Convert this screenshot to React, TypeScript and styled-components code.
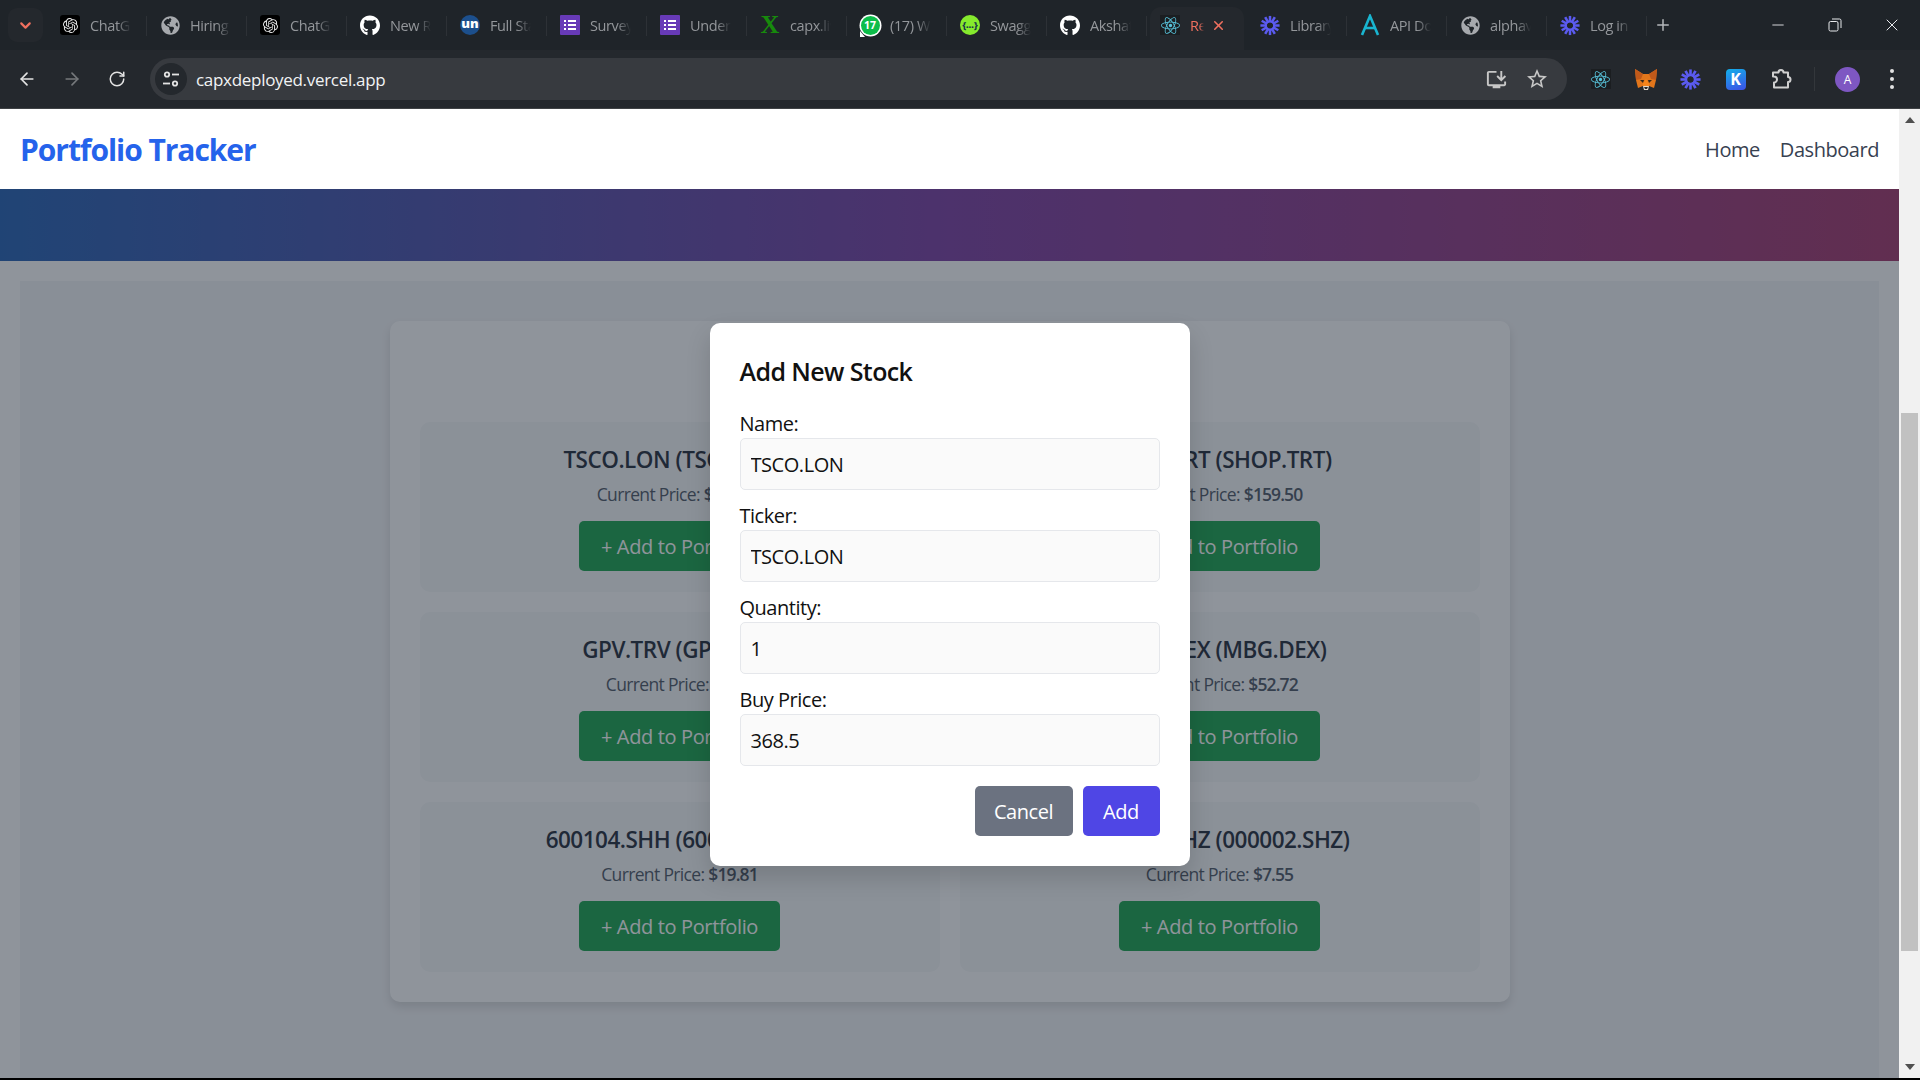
import React from "react";
import styled, { createGlobalStyle } from "styled-components";
import { FaGithub, FaGlobeAmericas, FaReact } from "react-icons/fa";
import { SiOpenai } from "react-icons/si";
import { MdOutlineInstallDesktop, MdStarBorder } from "react-icons/md";
import { ArrowLeft, ArrowRight, ChevronDown, Minus, Plus, RotateCw, X } from "lucide-react";

const Global = createGlobalStyle`
  html, body {
    margin: 0;
    padding: 0;
    height: 100%;
    overflow: hidden;
    background: #000;
  }
  * {
    box-sizing: border-box;
  }
  body {
    font-family: "Open Sans", "Noto Sans", sans-serif;
  }
`;

const Burst = ({ size = 21 }: { size?: number }) => {
  const spokes = Array.from({ length: 12 }, (_, i) => (i * 360) / 12);
  return (
    <svg width={size} height={size} viewBox="0 0 24 24">
      {spokes.map((a) => (
        <line key={a} x1="12" y1="0.5" x2="12" y2="8" stroke="#5b5bf0" strokeWidth="3" transform={`rotate(${a} 12 12)`} />
      ))}
      <circle cx="12" cy="12" r="5" fill="none" stroke="#5b5bf0" strokeWidth="2.6" />
    </svg>
  );
};

const FormsIcon = () => (
  <FormsBox>
    <FormsRow />
    <FormsRow />
    <FormsRow />
  </FormsBox>
);

const AtomBox = styled.span`
  width: 20px;
  height: 20px;
  background: #1b1e21;
  color: #58c4dc;
  display: flex;
  align-items: center;
  justify-content: center;
  font-size: 19px;
`;

const GptBox = styled.span`
  width: 20px;
  height: 20px;
  background: #000;
  border-radius: 3px;
  color: #e8e8e8;
  display: flex;
  align-items: center;
  justify-content: center;
  font-size: 15px;
`;

const FormsBox = styled.span`
  width: 20px;
  height: 20px;
  background: #673ab7;
  border-radius: 1px;
  display: flex;
  flex-direction: column;
  gap: 2px;
  align-items: center;
  justify-content: center;
`;

const FormsRow = styled.span`
  width: 12px;
  height: 2px;
  background: linear-gradient(to right, #fff 2px, transparent 2px, transparent 4px, #fff 4px);
`;

const UnBadge = styled.span`
  width: 20px;
  height: 20px;
  border-radius: 50%;
  background: #1c4f8c;
  color: #fff;
  font-size: 13px;
  font-weight: 800;
  line-height: 17px;
  text-align: center;
`;

const ExcelX = styled.span`
  width: 20px;
  height: 20px;
  color: #178a0c;
  font-family: "Liberation Serif", serif;
  font-size: 26px;
  font-weight: 700;
  line-height: 20px;
  text-align: center;
`;

const WaBadge = styled.span`
  width: 19px;
  height: 19px;
  border-radius: 50%;
  background: #0dbd4a;
  color: #fff;
  font-size: 10.5px;
  font-weight: 700;
  line-height: 19px;
  text-align: center;
  box-shadow: 0 0 0 1.5px #fff;
  position: relative;

  &::after {
    content: "";
    position: absolute;
    left: -1px;
    bottom: -2px;
    width: 0;
    height: 0;
    border-top: 6px solid transparent;
    border-left: 5px solid #fff;
  }
`;

const SwaggerBadge = styled.span`
  width: 20px;
  height: 20px;
  border-radius: 50%;
  background: #85ea2d;
  color: #173647;
  font-size: 9px;
  font-weight: 800;
  line-height: 19px;
  text-align: center;
`;

const LetterA = () => (
  <svg width="20" height="22" viewBox="0 0 20 22" fill="none" stroke="#19b5d0" strokeWidth="2.6">
    <path d="M2 21 L10 2 L18 21" />
    <path d="M5 14 H15" />
  </svg>
);

const PuzzleIcon = () => (
  <svg width="24" height="24" viewBox="0 0 24 24" fill="none" stroke="#d0d0d0" strokeWidth="2" strokeLinejoin="round">
    <path d="M4 5.5 H9.5 a2.5 2.5 0 0 1 5 0 H19 V10 a2.5 2.5 0 0 1 0 5 V20.5 H5 V15.5 a3 3 0 0 0 0 -6 H4 Z" />
  </svg>
);

const tabs = [
  { title: "ChatGPT", icon: <GptBox><SiOpenai /></GptBox> },
  { title: "Hiring", icon: <FaGlobeAmericas color="#a6a9ad" size={19} /> },
  { title: "ChatGPT", icon: <GptBox><SiOpenai /></GptBox> },
  { title: "New Repo", icon: <FaGithub color="#fff" size={21} /> },
  { title: "Full Stack", icon: <UnBadge>un</UnBadge> },
  { title: "Survey", icon: <FormsIcon /> },
  { title: "Under", icon: <FormsIcon /> },
  { title: "capx.live", icon: <ExcelX>X</ExcelX> },
  { title: "(17) WhatsApp", icon: <WaBadge>17</WaBadge> },
  { title: "Swagger", icon: <SwaggerBadge>{"{…}"}</SwaggerBadge> },
  { title: "Akshat", icon: <FaGithub color="#fff" size={21} /> },
  { title: "React", icon: <AtomBox><FaReact /></AtomBox>, active: true },
  { title: "Library", icon: <Burst /> },
  { title: "API Docs", icon: <LetterA /> },
  { title: "alphavantage", icon: <FaGlobeAmericas color="#a6a9ad" size={19} /> },
  { title: "Log in", icon: <Burst /> },
];

const stocks = [
  { name: "TSCO.LON", price: "368.50" },
  { name: "SHOP.TRT", price: "159.50" },
  { name: "GPV.TRV", price: "4.20" },
  { name: "MBG.DEX", price: "52.72" },
  { name: "600104.SHH", price: "19.81" },
  { name: "000002.SHZ", price: "7.55" },
];

const fields = [
  { label: "Name:", value: "TSCO.LON" },
  { label: "Ticker:", value: "TSCO.LON" },
  { label: "Quantity:", value: "1" },
  { label: "Buy Price:", value: "368.5" },
];

const Fox = () => (
  <svg width="24" height="23" viewBox="0 0 24 23">
    <polygon points="1,1 9,6 15,6 23,1 22,12 20,20 15,18 9,18 4,20 2,12" fill="#e2761b" />
    <polygon points="1,1 9,6 7,11 2,12" fill="#c0591a" />
    <polygon points="23,1 15,6 17,11 22,12" fill="#c0591a" />
    <polygon points="9,15 12,11 15,15 15,18 9,18" fill="#f6851b" />
    <polygon points="6,12 10,12 9,15" fill="#35281c" />
    <polygon points="18,12 14,12 15,15" fill="#35281c" />
    <polygon points="9,18 15,18 14,22 10,22" fill="#e4d9cc" />
    <polygon points="10,19 14,19 13,21 11,21" fill="#2b2b2b" />
  </svg>
);

const App = () => {
  return (
    <Screen>
      <Global />
      <TabStrip>
        <TabSearch>
          <ChevronDown size={17} strokeWidth={3} color="#f0705f" />
        </TabSearch>
        {tabs.map((t, i) => (
          <Tab key={i} $active={!!t.active}>
            <Favicon>{t.icon}</Favicon>
            <TabTitle $active={!!t.active}>{t.title}</TabTitle>
            {t.active && (
              <TabClose>
                <X size={15} strokeWidth={2.5} color="#f0705f" />
              </TabClose>
            )}
          </Tab>
        ))}
        <NewTab>
          <Plus size={18} strokeWidth={2} color="#b4b7ba" />
        </NewTab>
        <WindowControls>
          <WinButton>
            <Minus size={18} strokeWidth={1.2} color="#e8eaed" />
          </WinButton>
          <WinButton>
            <RestoreIcon />
          </WinButton>
          <WinButton>
            <X size={20} strokeWidth={1.2} color="#e8eaed" />
          </WinButton>
        </WindowControls>
      </TabStrip>

      <Toolbar>
        <NavIcons>
          <NavIcon>
            <ArrowLeft size={20} color="#e3e3e3" />
          </NavIcon>
          <NavIcon>
            <ArrowRight size={20} color="#75787b" />
          </NavIcon>
          <NavIcon>
            <RotateCw size={18} color="#e3e3e3" />
          </NavIcon>
        </NavIcons>
        <Omnibox>
          <TuneChip>
            <TuneIcon />
          </TuneChip>
          <Url>capxdeployed.vercel.app</Url>
          <OmniActions>
            <MdOutlineInstallDesktop size={23} color="#c7c7c7" />
            <MdStarBorder size={24} color="#c7c7c7" />
          </OmniActions>
        </Omnibox>
        <Extensions>
          <ExtSlot>
            <AtomBox>
              <FaReact />
            </AtomBox>
          </ExtSlot>
          <ExtSlot>
            <Fox />
          </ExtSlot>
          <ExtSlot>
            <Burst />
          </ExtSlot>
          <ExtSlot>
            <KBadge>K</KBadge>
          </ExtSlot>
          <ExtSlot>
            <PuzzleIcon />
          </ExtSlot>
          <ToolbarDivider />
          <Avatar>A</Avatar>
          <Dots>
            <Dot />
            <Dot />
            <Dot />
          </Dots>
        </Extensions>
      </Toolbar>

      <Viewport>
        <PageArea>
          <Navbar>
            <Brand>Portfolio Tracker</Brand>
            <NavLinks>
              <NavLink>Home</NavLink>
              <NavLink>Dashboard</NavLink>
            </NavLinks>
          </Navbar>
          <Hero />
          <Main>
            <Panel>
              <PanelHeading>Available Stocks</PanelHeading>
              <StockGrid>
                {stocks.map((s) => (
                  <StockCard key={s.name}>
                    <StockName>
                      {s.name} ({s.name})
                    </StockName>
                    <StockPrice>
                      Current Price: <PriceValue>${s.price}</PriceValue>
                    </StockPrice>
                    <AddButton>+ Add to Portfolio</AddButton>
                  </StockCard>
                ))}
              </StockGrid>
            </Panel>
          </Main>
          <Overlay>
            <Modal>
              <ModalTitle>Add New Stock</ModalTitle>
              {fields.map((f) => (
                <Field key={f.label}>
                  <FieldLabel>{f.label}</FieldLabel>
                  <FieldInput readOnly value={f.value} />
                </Field>
              ))}
              <ModalActions>
                <ModalButton $bg="#6b7280" $w={98}>Cancel</ModalButton>
                <ModalButton $bg="#4f46e5" $w={77}>Add</ModalButton>
              </ModalActions>
            </Modal>
          </Overlay>
        </PageArea>
        <Scrollbar>
          <ArrowUp />
          <ThumbTrack>
            <Thumb />
          </ThumbTrack>
          <ArrowDown />
        </Scrollbar>
      </Viewport>
      <BottomEdge />
    </Screen>
  );
};

export default App;

const RestoreIcon = () => (
  <svg width="14" height="14" viewBox="0 0 14 14" fill="none" stroke="#e8eaed" strokeWidth="1">
    <rect x="1" y="3.5" width="9" height="9.5" rx="1.5" />
    <path d="M4 1 H11.5 A1.5 1.5 0 0 1 13 2.5 V10" />
  </svg>
);

const TuneIcon = () => (
  <svg width="18" height="18" viewBox="0 0 18 18" fill="none" stroke="#e3e3e3" strokeWidth="1.8">
    <circle cx="5" cy="4.5" r="2.2" />
    <path d="M10 4.5 H17" />
    <circle cx="13" cy="13.5" r="2.2" />
    <path d="M1 13.5 H8" />
  </svg>
);

const Screen = styled.div`
  width: 1920px;
  height: 1080px;
  display: flex;
  flex-direction: column;
  overflow: hidden;
`;

const TabStrip = styled.div`
  height: 50px;
  background: #1f2429;
  display: flex;
  align-items: flex-end;
  padding-left: 8px;
`;

const TabSearch = styled.div`
  width: 35px;
  height: 34px;
  margin: 0 4px 8px 0;
  border-radius: 9px;
  background: #24282d;
  display: flex;
  align-items: center;
  justify-content: center;
`;

const Tab = styled.div<{ $active: boolean }>`
  height: 43px;
  padding: 0 0 7px ${({ $active }) => ($active ? "10px" : "13px")};
  display: flex;
  align-items: center;
  position: relative;
  background: ${({ $active }) => ($active ? "#24282d" : "transparent")};
  border-radius: ${({ $active }) => ($active ? "11px 11px 0 0" : "0")};
  margin: ${({ $active }) => ($active ? "0 3px" : "0")};
  width: ${({ $active }) => ($active ? "94px" : "100px")};

  &::after {
    content: "";
    position: absolute;
    right: 0;
    top: 9px;
    height: 20px;
    width: 1px;
    background: ${({ $active }) => ($active ? "transparent" : "#2d3136")};
  }
`;

const Favicon = styled.span`
  width: 20px;
  height: 22px;
  display: flex;
  align-items: center;
  justify-content: center;
  flex-shrink: 0;
`;

const TabTitle = styled.span<{ $active: boolean }>`
  margin-left: 10px;
  width: ${({ $active }) => ($active ? "14px" : "41px")};
  overflow: hidden;
  white-space: nowrap;
  font-size: 14.5px;
  letter-spacing: -0.4px;
  color: ${({ $active }) => ($active ? "#f0705f" : "#94979b")};
  -webkit-mask-image: linear-gradient(to right, #000 65%, transparent 100%);
  mask-image: linear-gradient(to right, #000 65%, transparent 100%);
`;

const TabClose = styled.span`
  margin-left: 7px;
  display: flex;
`;

const NewTab = styled.div`
  width: 32px;
  height: 43px;
  padding-bottom: 7px;
  display: flex;
  align-items: center;
  justify-content: center;
`;

const WindowControls = styled.div`
  margin-left: auto;
  height: 50px;
  display: flex;
  align-items: center;
`;

const WinButton = styled.div`
  width: 57px;
  height: 50px;
  display: flex;
  align-items: center;
  justify-content: center;
`;

const Toolbar = styled.div`
  height: 59px;
  background: #24282d;
  border-bottom: 1px solid #3f4245;
  display: flex;
  align-items: center;
  padding: 0 0 0 4px;
`;

const NavIcons = styled.div`
  display: flex;
  width: 146px;
`;

const NavIcon = styled.div`
  width: 45px;
  height: 36px;
  display: flex;
  align-items: center;
  justify-content: center;
`;

const Omnibox = styled.div`
  width: 1417px;
  height: 42px;
  border-radius: 21px;
  background: #373a3f;
  display: flex;
  align-items: center;
  padding-left: 5px;
`;

const TuneChip = styled.div`
  width: 32px;
  height: 32px;
  border-radius: 50%;
  background: #24282d;
  display: flex;
  align-items: center;
  justify-content: center;
`;

const Url = styled.span`
  margin-left: 9px;
  font-size: 17px;
  letter-spacing: -0.3px;
  color: #f1f3f4;
`;

const OmniActions = styled.div`
  margin-left: auto;
  padding-right: 18px;
  display: flex;
  align-items: center;
  gap: 17px;
`;

const Extensions = styled.div`
  display: flex;
  align-items: center;
  flex: 1;
  padding-left: 11px;
`;

const ExtSlot = styled.div`
  width: 45px;
  height: 36px;
  display: flex;
  align-items: center;
  justify-content: center;
`;

const KBadge = styled.span`
  width: 20px;
  height: 21px;
  border-radius: 4px;
  background: linear-gradient(160deg, #12b0ea, #3d4fe6);
  color: #fff;
  font-size: 16px;
  font-weight: 700;
  line-height: 21px;
  text-align: center;
`;

const ToolbarDivider = styled.div`
  width: 1px;
  height: 24px;
  background: #33373b;
  margin: 0 20px 0 11px;
`;

const Avatar = styled.div`
  width: 25px;
  height: 25px;
  border-radius: 50%;
  background: #7e57c2;
  color: #fff;
  font-size: 12px;
  text-align: center;
  line-height: 25px;
`;

const Dots = styled.div`
  margin-left: 30px;
  display: flex;
  flex-direction: column;
  gap: 4px;
`;

const Dot = styled.span`
  width: 4px;
  height: 4px;
  border-radius: 50%;
  background: #e3e3e3;
`;

const Viewport = styled.div`
  flex: 1;
  display: flex;
  min-height: 0;
`;

const PageArea = styled.div`
  width: 1899px;
  height: 969px;
  position: relative;
  overflow: hidden;
  background: #fff;
`;

const Navbar = styled.div`
  height: 80px;
  background: #fff;
  display: flex;
  align-items: center;
  justify-content: space-between;
  padding: 0 20px;
  position: relative;
  z-index: 5;
`;

const Brand = styled.div`
  height: 40px;
  font-size: 30px;
  font-weight: 700;
  line-height: 42px;
  letter-spacing: -1.05px;
  color: #2563eb;
`;

const NavLinks = styled.div`
  display: flex;
  gap: 20px;
`;

const NavLink = styled.span`
  font-size: 20px;
  font-weight: 500;
  letter-spacing: -0.45px;
  color: #374151;
`;

const Hero = styled.div`
  height: 72px;
  background: linear-gradient(to right, rgb(33, 95, 179), rgb(122, 58, 160) 50%, rgb(163, 51, 105));
`;

const Main = styled.div`
  margin: 20px 20px 0;
  padding: 40px 0 200px;
  background: #f3f4f6;
`;

const Panel = styled.div`
  width: 1120px;
  margin: 0 auto;
  padding: 30px;
  background: #fff;
  border-radius: 10px;
  box-shadow: 0 5px 10px rgba(0, 0, 0, 0.12);
`;

const PanelHeading = styled.div`
  height: 71px;
  font-size: 30px;
  font-weight: 700;
  text-align: center;
  color: #1f2937;
`;

const StockGrid = styled.div`
  display: grid;
  grid-template-columns: 1fr 1fr;
  gap: 20px;
`;

const StockCard = styled.div`
  height: 170px;
  padding-top: 20px;
  background: #f7f8f9;
  border-radius: 10px;
  display: flex;
  flex-direction: column;
  align-items: center;
`;

const StockName = styled.div`
  font-size: 22.5px;
  font-weight: 600;
  line-height: 35px;
  letter-spacing: -0.5px;
  color: #1f2937;
`;

const StockPrice = styled.div`
  margin: 5px 0 14px;
  font-size: 17.5px;
  line-height: 25px;
  letter-spacing: -0.65px;
  color: #4b5563;
`;

const PriceValue = styled.span`
  font-weight: 600;
  letter-spacing: -0.9px;
`;

const AddButton = styled.div`
  width: 201px;
  height: 50px;
  border-radius: 5px;
  background: #16a34a;
  color: #fff;
  font-size: 20px;
  line-height: 51px;
  letter-spacing: -0.36px;
  text-align: center;
`;

const Overlay = styled.div`
  position: absolute;
  inset: 0;
  z-index: 3;
  padding-top: 2px;
  background: rgba(31, 41, 55, 0.5);
  display: flex;
  align-items: center;
  justify-content: center;
`;

const Modal = styled.div`
  width: 480px;
  padding: 30px;
  background: #fff;
  border-radius: 10px;
  box-shadow: 0 12px 24px rgba(0, 0, 0, 0.15);
`;

const ModalTitle = styled.div`
  height: 35px;
  font-size: 25px;
  font-weight: 600;
  line-height: 37px;
  letter-spacing: -0.6px;
  color: #111;
  margin-bottom: 20px;
`;

const Field = styled.div`
  margin-bottom: 10px;
`;

const FieldLabel = styled.div`
  height: 30px;
  font-size: 20px;
  line-height: 31px;
  letter-spacing: -0.48px;
  color: #111;
`;

const FieldInput = styled.input`
  display: block;
  width: 100%;
  height: 52px;
  padding: 0 10px;
  background: #fafafa;
  border: 1px solid #e5e7eb;
  border-radius: 5px;
  font-family: inherit;
  font-size: 20px;
  letter-spacing: -0.45px;
  color: #111;
  outline: none;
`;

const ModalActions = styled.div`
  margin-top: 20px;
  display: flex;
  justify-content: flex-end;
  gap: 10px;
`;

const ModalButton = styled.div<{ $bg: string; $w: number }>`
  height: 50px;
  width: ${({ $w }) => $w}px;
  border-radius: 5px;
  background: ${({ $bg }) => $bg};
  color: #fff;
  font-size: 20px;
  line-height: 51px;
  letter-spacing: -0.45px;
  text-align: center;
`;

const Scrollbar = styled.div`
  width: 21px;
  height: 969px;
  background: #f1f1f1;
  display: flex;
  flex-direction: column;
  align-items: center;
`;

const ArrowUp = styled.div`
  margin-top: 8px;
  width: 0;
  height: 0;
  border-left: 5px solid transparent;
  border-right: 5px solid transparent;
  border-bottom: 6px solid #505050;
`;

const ArrowDown = styled.div`
  margin-bottom: 8px;
  width: 0;
  height: 0;
  border-left: 5px solid transparent;
  border-right: 5px solid transparent;
  border-top: 6px solid #505050;
`;

const ThumbTrack = styled.div`
  flex: 1;
  width: 17px;
  padding-top: 290px;
`;

const Thumb = styled.div`
  height: 538px;
  background: #c1c1c1;
`;

const BottomEdge = styled.div`
  height: 2px;
  background: #000;
`;
